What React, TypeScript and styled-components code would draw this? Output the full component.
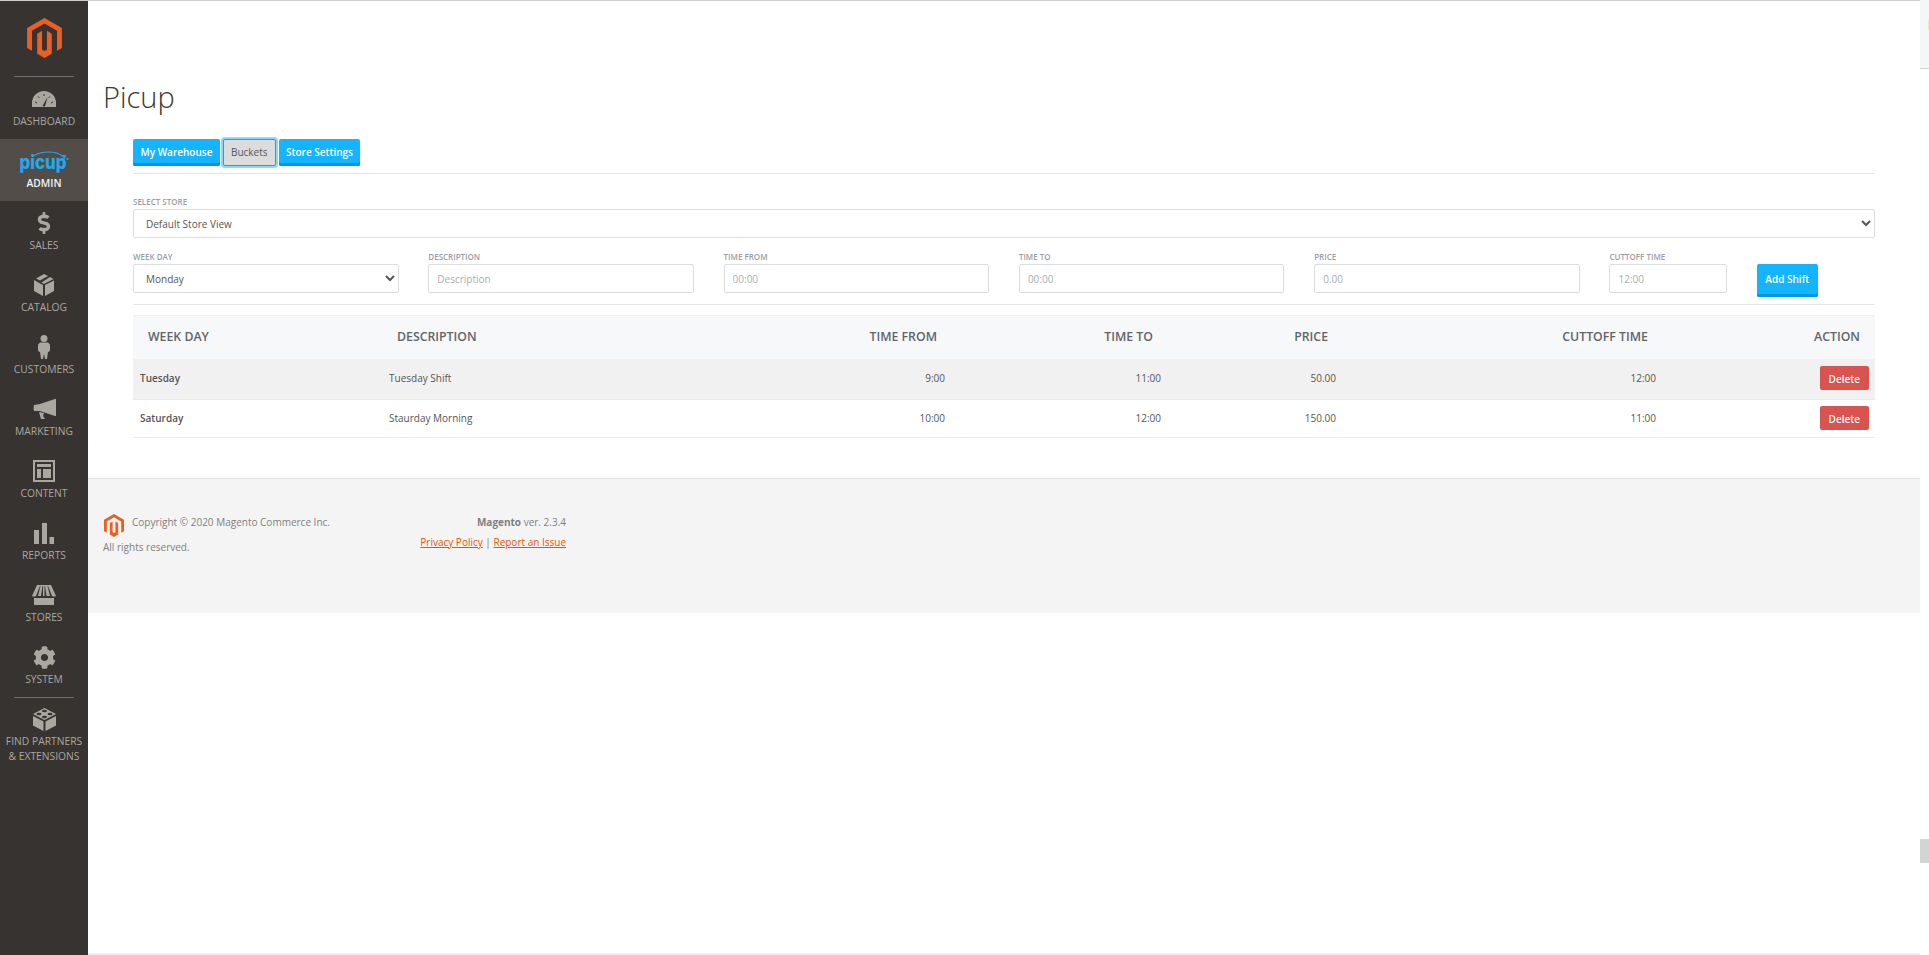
import React from 'react'
import styled, { createGlobalStyle } from 'styled-components'
import { FaCog, FaDollarSign } from 'react-icons/fa'

const GlobalStyle = createGlobalStyle`
    html, body {
        margin: 0;
        padding: 0;
        background: #fff;
        font-family: "Open Sans", "Liberation Sans", sans-serif;
    }
    * {
        box-sizing: border-box;
    }
`

const Page = styled.div`
    display: grid;
    grid-template-columns: 88px 1832px 9px;
    width: 1929px;
    height: 955px;
    overflow: hidden;
`

const Sidebar = styled.nav`
    display: flex;
    flex-direction: column;
    background-color: #373330;
    border-top: solid 1px #cfcfcf;
`

const LogoArea = styled.div`
    display: flex;
    justify-content: center;
    height: 75px;
    padding-top: 17px;
`

const NavDivider = styled.div`
    height: 1px;
    margin: 0 14px;
    flex: none;
    background-color: #736e69;
`

interface NavItemProps {
    $active?: boolean,
    $compact?: boolean,
}
const NavItem = styled.a<NavItemProps>`
    display: flex;
    flex-direction: column;
    align-items: center;
    height: 62px;
    flex: none;
    padding-top: ${props => props.$compact ? '7px' : '8px'};
    background-color: ${props => props.$active ? '#524d49' : 'transparent'};
    color: ${props => props.$active ? '#f4f4f4' : '#aaa6a0'};
    font-size: 10.3px;
    font-weight: ${props => props.$active ? 600 : 400};
    text-align: center;
    text-transform: uppercase;
    white-space: nowrap;
`

const NavIcon = styled.div`
    display: flex;
    justify-content: center;
    align-items: center;
    height: 28px;
    flex: none;
    color: #aaa6a0;
`

const NavLabel = styled.span`
    display: block;
    line-height: 15px;
    margin-top: 1px;
`

const Main = styled.main`
    display: flex;
    flex-direction: column;
    height: 955px;
    border-top: solid 1px #cfcfcf;
    border-bottom: solid 2px #f0f0f0;
`

const PageTitle = styled.h1`
    margin: 77px 0 0 15px;
    color: #41362f;
    font-size: 29px;
    font-weight: 300;
    line-height: 38px;
`

const Content = styled.section`
    margin: 23px 45px 0 45px;
`

const Tabs = styled.div`
    display: flex;
    gap: 3px;
    padding-bottom: 7px;
    border-bottom: solid 1px #e4e5e7;
`

interface TabProps {
    $selected?: boolean,
}
const Tab = styled.button<TabProps>`
    height: 27px;
    margin: 0;
    padding: 0 ${props => props.$selected ? '8px' : '7.5px'} 2px;
    border: none;
    border-radius: 2px;
    background-color: ${props => props.$selected ? '#dcdcdc' : '#14b4ff'};
    box-shadow: ${props => props.$selected
        ? 'inset 0 0 0 1px #7b8288, 0 0 0 2px #86d9ff'
        : 'inset 0 -3px 0 #0098df'};
    color: ${props => props.$selected ? '#555' : '#fff'};
    font-family: inherit;
    font-size: 10px;
    font-weight: ${props => props.$selected ? 400 : 600};
`

const FieldLabel = styled.label`
    display: block;
    height: 10px;
    margin-bottom: 2px;
    color: #9a9da3;
    font-size: 8px;
    font-weight: 600;
    line-height: 10px;
    text-transform: uppercase;
`

const StoreField = styled.div`
    margin-top: 23px;
`

const FormRow = styled.div`
    display: grid;
    grid-template-columns: repeat(5, 265.5px) 117.5px 61px;
    column-gap: 29.8px;
    align-items: start;
    margin-top: 14px;
    padding-bottom: 7px;
    border-bottom: solid 1px #e4e5e7;
`

const Select = styled.select`
    display: block;
    width: 100%;
    height: 29px;
    padding: 0 8px;
    border: solid 1px #dcdde1;
    border-radius: 2px;
    background-color: #fff;
    color: #555;
    font-family: inherit;
    font-size: 10px;
    outline: none;
`

const Input = styled.input`
    display: block;
    width: 100%;
    height: 29px;
    padding: 0 8px;
    border: solid 1px #dcdde1;
    border-radius: 2px;
    color: #555;
    font-family: inherit;
    font-size: 10px;
    outline: none;

    &::placeholder {
        color: #a9adb2;
    }
`

const AddButton = styled.button`
    width: 61px;
    height: 33px;
    margin-top: 12px;
    padding: 0 0 3px;
    border: none;
    border-radius: 2px;
    background-color: #14b4ff;
    box-shadow: inset 0 -3px 0 #0098df;
    color: #fff;
    font-family: inherit;
    font-size: 10px;
    font-weight: 600;
`

const Table = styled.table`
    width: 100%;
    margin-top: 10px;
    border-collapse: collapse;
    table-layout: fixed;
`

interface CellProps {
    $right?: boolean,
    $width?: number,
}
const Th = styled.th<CellProps>`
    width: ${props => props.$width}px;
    height: 43px;
    padding: 0 15px 2px;
    border-top: solid 1px #eff0f2;
    background-color: #f7f8fa;
    color: #5f656b;
    font-size: 12.3px;
    font-weight: 600;
    text-align: ${props => props.$right ? 'right' : 'left'};
    text-transform: uppercase;
`

interface RowProps {
    $shaded?: boolean,
    $height: number,
}
const Row = styled.tr<RowProps>`
    height: ${props => props.$height}px;
    background-color: ${props => props.$shaded ? '#f1f1f1' : '#fff'};
    border-bottom: solid 1px #e9eaec;
`

const Td = styled.td<CellProps>`
    padding: 0 7px 2px;
    color: #555;
    font-size: 10px;
    text-align: ${props => props.$right ? 'right' : 'left'};
`

const DayCell = styled(Td)`
    font-weight: 600;
`

const ActionCell = styled(Td)`
    padding: 0 6.5px 1px 0;
    text-align: right;
`

const DeleteButton = styled.button`
    width: 48.5px;
    height: 24px;
    padding: 2px 0 0;
    border: none;
    border-radius: 2px;
    background-color: #d9534f;
    color: #fff;
    font-family: inherit;
    font-size: 10px;
    font-weight: 600;
    vertical-align: middle;
`

const Footer = styled.footer`
    display: flex;
    height: 135px;
    margin-top: 40px;
    padding: 35px 0 0 15px;
    border-top: solid 1px #e3e3e3;
    background-color: #f4f4f4;
    color: #808080;
    font-size: 10px;
`

const FooterLeft = styled.div`
    width: 233px;
`

const Copyright = styled.div`
    display: flex;
    gap: 8px;
    height: 22px;
    padding-left: 1px;
    line-height: 17px;
    white-space: nowrap;
`

const Rights = styled.div`
    margin-top: 4px;
    line-height: 14px;
`

const FooterRight = styled.div`
    width: 230px;
    text-align: right;
    line-height: 17px;
`

const Links = styled.div`
    margin-top: 3px;
    color: #808080;
`

const FooterLink = styled.a`
    color: #eb5202;
    text-decoration: underline;
`

const Rail = styled.aside`
    display: flex;
    flex-direction: column;
`

const RailTop = styled.div`
    position: relative;
    height: 69px;
    flex: none;
    background-color: #f5f6f8;
    border-bottom: solid 1px #d4d4d4;
`

const RailMark = styled.span`
    position: absolute;
    top: 21px;
    right: 0;
    width: 1px;
    height: 9px;
    background-color: #ecf58a;
`

const RailThumb = styled.div`
    height: 24px;
    margin-top: 770px;
    flex: none;
    background-color: #d4d4d4;
`

const PicupText = styled.text`
    font-family: Inter, "Open Sans", sans-serif;
    font-size: 19px;
    font-weight: 800;
    text-transform: none;
    fill: #23a9e8;
`

function MagentoLogo({ width, height }: { width: number, height: number }) {
    return (
        <svg width={width} height={height} viewBox="0 0 100 115" fill="#eb5f22">
            <path d="M50 0 L100 29 V86 L86 94 V37 L50 16 L14 37 V94 L0 86 V29 Z" />
            <path d="M29 45 L43 37 V91 L50 95 L57 91 V37 L71 45 V103 L50 115 L29 103 Z" />
        </svg>
    )
}

function PicupLogo() {
    return (
        <svg width="56" height="28" viewBox="0 0 56 28">
            <path d="M17 9 C25 4 40 3 48 10" fill="none" stroke="#23a9e8" strokeWidth="1.1" />
            <path d="M45 8 L50 8 L49 12 Z" fill="#23a9e8" />
            <circle cx="51.5" cy="12" r="1.1" fill="#23a9e8" />
            <PicupText x="27" y="22" textAnchor="middle" textLength="47" lengthAdjust="spacingAndGlyphs">picup</PicupText>
        </svg>
    )
}

const GaugeIcon = () => (
    <svg width="24" height="16" viewBox="0 0 24 16">
        <path d="M0 16 V12 A12 12 0 0 1 24 12 V16 Z" fill="currentColor" />
        <path d="M10.5 15 L15.5 6 L13 15.5 Z" fill="#373330" />
        <path d="M3 11 L5 12 M6 5.5 L7.5 7 M12 3 V5 M18 5.5 L16.5 7 M21 11 L19 12" stroke="#373330" strokeWidth="1" />
    </svg>
)

const BoxIcon = () => (
    <svg width="20" height="22" viewBox="0 0 20 22" fill="currentColor">
        <path d="M10 0 L14 2 L6 6.5 L2 4.5 Z" />
        <path d="M16 3 L19.5 5 L10 10 L7.5 8.5 Z" />
        <path d="M0 6 L9 11 V22 L0 17 Z" />
        <path d="M20 6.5 V17 L11 22 V11 Z" />
    </svg>
)

const PersonIcon = () => (
    <svg width="12" height="24" viewBox="0 0 12 24" fill="currentColor">
        <circle cx="6" cy="3.5" r="3.5" />
        <path d="M2 7.5 H10 L12 9.5 V16 L10 17 L9 24 H7 L6 19 L5 24 H3 L2 17 L0 16 V9.5 Z" />
    </svg>
)

const MegaphoneIcon = () => (
    <svg width="23" height="20" viewBox="0 0 23 20" fill="currentColor">
        <path d="M22 0 H23 V17 H22 L7 12 H1 Q0 9 1 6 L7 5 Z" />
        <path d="M6 13 L11 14 L10 17 L12 20 H8 Z" />
    </svg>
)

const ContentIcon = () => (
    <svg width="22" height="22" viewBox="0 0 22 22" fill="currentColor">
        <path fillRule="evenodd" d="M0 0 H22 V22 H0 Z M2 2 V20 H20 V2 Z" />
        <path d="M4 4 H18 V7 H4 Z M4 9 H8 V18 H4 Z M10 9 H18 V18 H10 Z" />
    </svg>
)

const ReportsIcon = () => (
    <svg width="20" height="21" viewBox="0 0 20 21" fill="currentColor">
        <path d="M0 7 H5 V21 H0 Z M8 0 H13 V21 H8 Z M15.5 14 H20 V21 H15.5 Z" />
    </svg>
)

const StoresIcon = () => (
    <svg width="24" height="20" viewBox="0 0 24 20" fill="currentColor">
        <path d="M5 0 H19 L24 11 Q22 12 20 11 L16 1 H15.5 L18 11 H14.5 L13 1 H12.5 L12.5 11 H11 L11 1 H10.5 L9 11 H6 L8.5 1 H8 L4 11 Q2 12 0 11 Z" />
        <path d="M2 13 H22 V20 H2 Z" />
    </svg>
)

const LegoIcon = () => (
    <svg width="23" height="23" viewBox="0 0 23 23" fill="currentColor">
        <path d="M11.5 0 L23 6 L11.5 12 L0 6 Z" />
        <path d="M0 8 L10.5 13.5 V23 L0 17.5 Z" />
        <path d="M23 8 V17.5 L12.5 23 V13.5 Z" />
        <ellipse cx="11.5" cy="3" rx="2.5" ry="1.2" fill="#373330" />
        <ellipse cx="6" cy="6" rx="2.5" ry="1.2" fill="#373330" />
        <ellipse cx="17" cy="6" rx="2.5" ry="1.2" fill="#373330" />
        <ellipse cx="11.5" cy="9" rx="2.5" ry="1.2" fill="#373330" />
    </svg>
)

const navItems = [
    { label: 'Dashboard', icon: <GaugeIcon /> },
    { label: 'Admin', icon: <PicupLogo />, active: true },
    { label: 'Sales', icon: <FaDollarSign size={22} /> },
    { label: 'Catalog', icon: <BoxIcon /> },
    { label: 'Customers', icon: <PersonIcon /> },
    { label: 'Marketing', icon: <MegaphoneIcon /> },
    { label: 'Content', icon: <ContentIcon /> },
    { label: 'Reports', icon: <ReportsIcon /> },
    { label: 'Stores', icon: <StoresIcon /> },
    { label: 'System', icon: <FaCog size={23} /> },
]

const fields = [
    { label: 'Description', placeholder: 'Description' },
    { label: 'Time From', placeholder: '00:00' },
    { label: 'Time To', placeholder: '00:00' },
    { label: 'Price', placeholder: '0.00' },
    { label: 'Cuttoff Time', placeholder: '12:00' },
]

const shifts = [
    { day: 'Tuesday', description: 'Tuesday Shift', from: '9:00', to: '11:00', price: '50.00', cutoff: '12:00', height: 41, shaded: true },
    { day: 'Saturday', description: 'Staurday Morning', from: '10:00', to: '12:00', price: '150.00', cutoff: '11:00', height: 38 },
]

export default function App() {
    return (
        <Page>
            <GlobalStyle />
            <Sidebar>
                <LogoArea>
                    <MagentoLogo width={35} height={40} />
                </LogoArea>
                <NavDivider />
                {navItems.map(item => (
                    <NavItem key={item.label} $active={item.active}>
                        <NavIcon>{item.icon}</NavIcon>
                        <NavLabel>{item.label}</NavLabel>
                    </NavItem>
                ))}
                <NavDivider />
                <NavItem $compact>
                    <NavIcon><LegoIcon /></NavIcon>
                    <NavLabel>Find Partners<br />&amp; Extensions</NavLabel>
                </NavItem>
            </Sidebar>

            <Main>
                <PageTitle>Picup</PageTitle>
                <Content>
                    <Tabs>
                        <Tab>My Warehouse</Tab>
                        <Tab $selected>Buckets</Tab>
                        <Tab>Store Settings</Tab>
                    </Tabs>

                    <StoreField>
                        <FieldLabel>Select Store</FieldLabel>
                        <Select defaultValue="default">
                            <option value="default">Default Store View</option>
                        </Select>
                    </StoreField>

                    <FormRow>
                        <div>
                            <FieldLabel>Week Day</FieldLabel>
                            <Select defaultValue="monday">
                                <option value="monday">Monday</option>
                            </Select>
                        </div>
                        {fields.map(field => (
                            <div key={field.label}>
                                <FieldLabel>{field.label}</FieldLabel>
                                <Input placeholder={field.placeholder} />
                            </div>
                        ))}
                        <AddButton>Add Shift</AddButton>
                    </FormRow>

                    <Table>
                        <thead>
                            <tr>
                                <Th $width={249}>Week Day</Th>
                                <Th $width={300}>Description</Th>
                                <Th $width={270} $right>Time From</Th>
                                <Th $width={216} $right>Time To</Th>
                                <Th $width={175} $right>Price</Th>
                                <Th $width={320} $right>Cuttoff Time</Th>
                                <Th $right>Action</Th>
                            </tr>
                        </thead>
                        <tbody>
                            {shifts.map(shift => (
                                <Row key={shift.day} $height={shift.height} $shaded={shift.shaded}>
                                    <DayCell>{shift.day}</DayCell>
                                    <Td>{shift.description}</Td>
                                    <Td $right>{shift.from}</Td>
                                    <Td $right>{shift.to}</Td>
                                    <Td $right>{shift.price}</Td>
                                    <Td $right>{shift.cutoff}</Td>
                                    <ActionCell><DeleteButton>Delete</DeleteButton></ActionCell>
                                </Row>
                            ))}
                        </tbody>
                    </Table>
                </Content>

                <Footer>
                    <FooterLeft>
                        <Copyright>
                            <MagentoLogo width={20} height={23} />
                            <span>Copyright © 2020 Magento Commerce Inc.</span>
                        </Copyright>
                        <Rights>All rights reserved.</Rights>
                    </FooterLeft>
                    <FooterRight>
                        <div><b>Magento</b> ver. 2.3.4</div>
                        <Links>
                            <FooterLink>Privacy Policy</FooterLink> | <FooterLink>Report an Issue</FooterLink>
                        </Links>
                    </FooterRight>
                </Footer>
            </Main>

            <Rail>
                <RailTop><RailMark /></RailTop>
                <RailThumb />
            </Rail>
        </Page>
    )
}
